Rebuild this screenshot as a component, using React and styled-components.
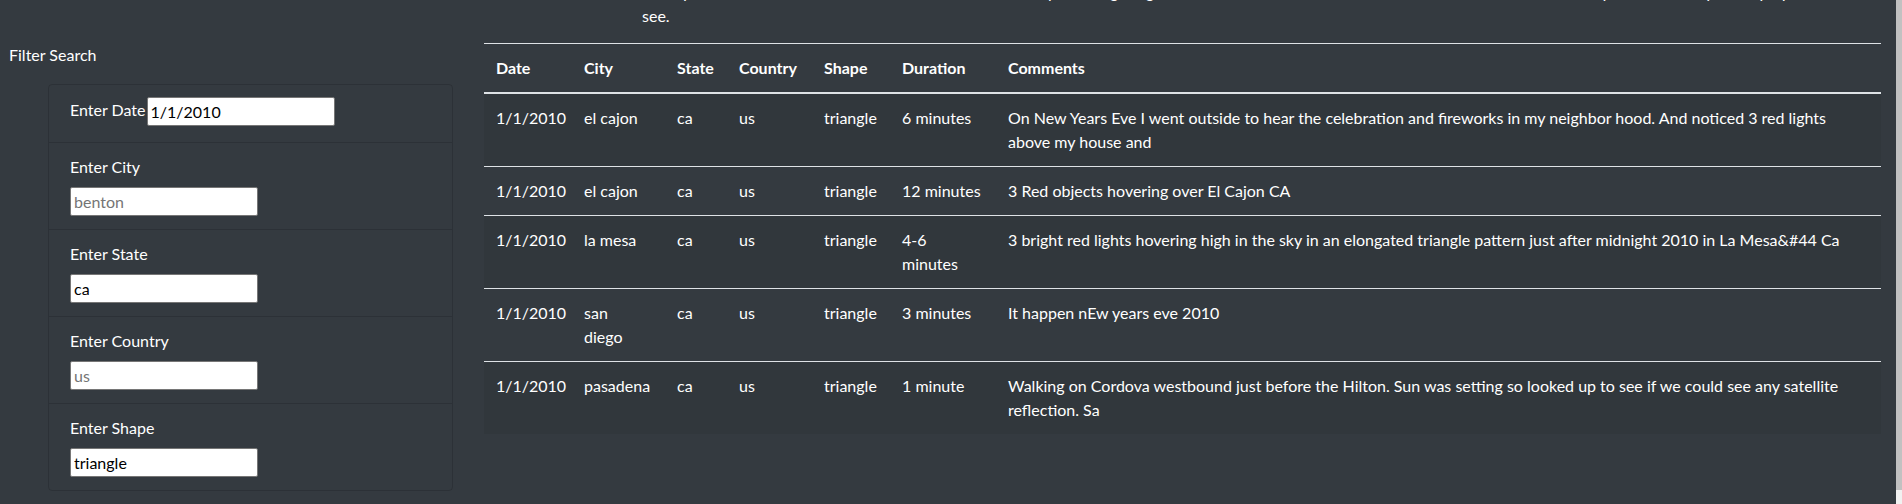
import React from "react";
import styled, { createGlobalStyle } from "styled-components";

const GlobalStyle = createGlobalStyle`
  *, *::before, *::after { box-sizing: border-box; }
  html, body { margin: 0; padding: 0; background: #343a40; }
  body {
    font-family: Lato, "Segoe UI", "Noto Sans", sans-serif;
    font-size: 16px;
    line-height: 1.5;
    color: #fff;
    height: 504px;
    overflow: hidden;
  }
`;

const Shell = styled.div`
  display: flex;
  height: 504px;
  overflow: hidden;
`;

const Page = styled.div`
  flex: 1;
  min-width: 0;
  display: flex;
  flex-direction: column;
`;

const Scrollbar = styled.div`
  width: 6px;
  flex: none;
  background: #c1c1c1;
  display: flex;
  flex-direction: column;
  justify-content: flex-end;
`;

const ScrollEnd = styled.div`
  height: 14px;
  background: #f1f1f1;
`;

const Intro = styled.p`
  margin: -20px 0 0;
  padding: 0 40px 0 642px;
`;

const IntroLine = styled.span`
  display: block;
  white-space: nowrap;
  overflow: hidden;
`;

const Main = styled.div`
  display: flex;
  align-items: flex-start;
  margin-top: 15px;
`;

const Sidebar = styled.aside`
  width: 484px;
  flex: none;
  padding-left: 9px;
`;

const SideTitle = styled.div`
  margin-bottom: 17px;
`;

const Card = styled.ul`
  margin: 0 0 0 39px;
  padding: 0;
  list-style: none;
  width: 405px;
  border: 1px solid rgba(0, 0, 0, 0.14);
  border-radius: 4px;
`;

const Item = styled.li`
  padding: ${(p) => (p.$first ? "12px 21px 16px" : "12px 21px")};
  border-top: ${(p) => (p.$first ? "none" : "1px solid rgba(0, 0, 0, 0.14)")};
`;

const InlineLabel = styled.label`
  margin-right: 1px;
`;

const BlockLabel = styled.label`
  display: block;
  margin-bottom: 8px;
`;

const Field = styled.input`
  width: 188px;
  height: 29px;
  padding: 1px 3px;
  border: 1px solid #767676;
  border-radius: 2px;
  background: #fff;
  color: #000;
  font: inherit;
  line-height: normal;
  display: ${(p) => (p.$inline ? "inline-block" : "block")};
  vertical-align: middle;
  margin-bottom: ${(p) => (p.$inline ? "0" : "1px")};
  &::placeholder { color: #757575; }
`;

const TableWrap = styled.div`
  flex: 1;
  min-width: 0;
  margin-right: 15px;
`;

const Table = styled.table`
  width: 100%;
  border-collapse: collapse;
  table-layout: fixed;
  color: #fff;
`;

const Th = styled.th`
  text-align: left;
  font-weight: 700;
  padding: 12px;
  line-height: 24px;
  vertical-align: bottom;
  border-top: 1px solid #dee2e6;
  border-bottom: 2px solid #dee2e6;
`;

const Row = styled.tr`
  &:nth-of-type(odd) { background: rgba(0, 0, 0, 0.05); }
`;

const Td = styled.td`
  padding: 12px;
  line-height: 24px;
  vertical-align: top;
  border-top: 1px solid #dee2e6;
  white-space: pre-line;
`;

const columns = [
  { key: "date", label: "Date", width: 88 },
  { key: "city", label: "City", width: 93 },
  { key: "state", label: "State", width: 62 },
  { key: "country", label: "Country", width: 85 },
  { key: "shape", label: "Shape", width: 78 },
  { key: "duration", label: "Duration", width: 106 },
  { key: "comments", label: "Comments" },
];

const rows = [
  {
    date: "1/1/2010",
    city: "el cajon",
    state: "ca",
    country: "us",
    shape: "triangle",
    duration: "6 minutes",
    comments:
      "On New Years Eve I went outside to hear the celebration and fireworks in my neighbor hood. And noticed 3 red lights\nabove my house and",
  },
  {
    date: "1/1/2010",
    city: "el cajon",
    state: "ca",
    country: "us",
    shape: "triangle",
    duration: "12 minutes",
    comments: "3 Red objects hovering over El Cajon CA",
  },
  {
    date: "1/1/2010",
    city: "la mesa",
    state: "ca",
    country: "us",
    shape: "triangle",
    duration: "4-6\nminutes",
    comments:
      "3 bright red lights hovering high in the sky in an elongated triangle pattern just after midnight 2010 in La Mesa&#44 Ca",
  },
  {
    date: "1/1/2010",
    city: "san\ndiego",
    state: "ca",
    country: "us",
    shape: "triangle",
    duration: "3 minutes",
    comments: "It happen nEw years eve 2010",
  },
  {
    date: "1/1/2010",
    city: "pasadena",
    state: "ca",
    country: "us",
    shape: "triangle",
    duration: "1 minute",
    comments:
      "Walking on Cordova westbound just before the Hilton. Sun was setting so looked up to see if we could see any satellite\nreflection. Sa",
  },
];

const filters = [
  { id: "city", label: "Enter City", placeholder: "benton" },
  { id: "state", label: "Enter State", value: "ca" },
  { id: "country", label: "Enter Country", placeholder: "us" },
  { id: "shape", label: "Enter Shape", value: "triangle" },
];

export default function App() {
  return (
    <>
      <GlobalStyle />
      <Shell>
        <Page>
          <Intro>
            <IntroLine>
              Have you ever wondered what is out there? Browse the reported sightings below, or use the filter search to narrow the list to the date, city, state, country or shape you want to
            </IntroLine>
            <IntroLine>see.</IntroLine>
          </Intro>
          <Main>
            <Sidebar>
              <SideTitle>Filter Search</SideTitle>
              <Card>
                <Item $first>
                  <InlineLabel htmlFor="datetime">Enter Date</InlineLabel>
                  <Field id="datetime" $inline defaultValue="1/1/2010" />
                </Item>
                {filters.map((f) => (
                  <Item key={f.id}>
                    <BlockLabel htmlFor={f.id}>{f.label}</BlockLabel>
                    <Field
                      id={f.id}
                      placeholder={f.placeholder}
                      defaultValue={f.value}
                    />
                  </Item>
                ))}
              </Card>
            </Sidebar>
            <TableWrap>
              <Table>
                <colgroup>
                  {columns.map((c) => (
                    <col key={c.key} style={c.width ? { width: c.width } : undefined} />
                  ))}
                </colgroup>
                <thead>
                  <tr>
                    {columns.map((c) => (
                      <Th key={c.key}>{c.label}</Th>
                    ))}
                  </tr>
                </thead>
                <tbody>
                  {rows.map((r, i) => (
                    <Row key={i}>
                      {columns.map((c) => (
                        <Td key={c.key}>{r[c.key]}</Td>
                      ))}
                    </Row>
                  ))}
                </tbody>
              </Table>
            </TableWrap>
          </Main>
        </Page>
        <Scrollbar>
          <ScrollEnd />
        </Scrollbar>
      </Shell>
    </>
  );
}
